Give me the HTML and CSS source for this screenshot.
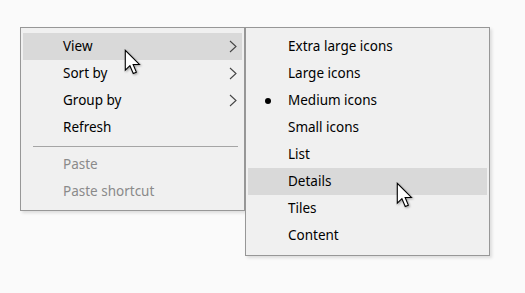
FILE: index.html
```html
<!DOCTYPE html>
<html>
<head>
<meta charset="utf-8">
<link rel="stylesheet" href="styles.css">
</head>
<body>
<div class="stage">
  <div class="menu main">
    <div class="item hot">View<svg class="chev" viewBox="0 0 8 12"><path d="M1 0.5 L7 6 L1 11.5" /></svg></div>
    <div class="item">Sort by<svg class="chev" viewBox="0 0 8 12"><path d="M1 0.5 L7 6 L1 11.5" /></svg></div>
    <div class="item">Group by<svg class="chev" viewBox="0 0 8 12"><path d="M1 0.5 L7 6 L1 11.5" /></svg></div>
    <div class="item">Refresh</div>
    <div class="sep"></div>
    <div class="item off">Paste</div>
    <div class="item off">Paste shortcut</div>
    <svg class="cursor c1" viewBox="0 0 14 21"><path d="M1 1 L1 16.5 L4.6 13 L7.2 19 L9.6 18 L7.1 12 L12 12 Z"/></svg>
  </div>
  <div class="menu sub">
    <div class="item">Extra large icons</div>
    <div class="item">Large icons</div>
    <div class="item"><span class="bullet"></span>Medium icons</div>
    <div class="item">Small icons</div>
    <div class="item">List</div>
    <div class="item hot">Details</div>
    <div class="item">Tiles</div>
    <div class="item">Content</div>
    <svg class="cursor c2" viewBox="0 0 14 21"><path d="M1 1 L1 16.5 L4.6 13 L7.2 19 L9.6 18 L7.1 12 L12 12 Z"/></svg>
  </div>
</div>
</body>
</html>
```
FILE: styles.css
```css
html, body {
  margin: 0;
  padding: 0;
  background: #fafafa;
  width: 525px;
  height: 293px;
  overflow: hidden;
}
.stage {
  display: flex;
  align-items: flex-start;
  padding: 27px 0 0 20px;
  font-family: "Noto Sans", "Segoe UI", sans-serif;
  font-size: 13.5px;
  color: #000;
}
.menu {
  position: relative;
  background: #f0f0f0;
  border: 1px solid #979797;
  padding: 5px 2px;
  box-shadow: 2px 2px 3px rgba(0,0,0,0.12);
}
.main {
  width: 219px;
}
.sub {
  width: 239px;
  padding-bottom: 6px;
}
.item {
  position: relative;
  height: 27px;
  line-height: 27px;
  padding-left: 40px;
}
.hot {
  background: #d9d9d9;
}
.off {
  color: #8a8a8a;
}
.sep {
  height: 1px;
  background: #a5a5a5;
  margin: 5px 4px 4px 10px;
}
.chev {
  position: absolute;
  right: 5px;
  top: 7px;
  width: 8px;
  height: 13px;
  fill: none;
  stroke: #444;
  stroke-width: 1.1;
}
.bullet {
  position: absolute;
  left: 17px;
  top: 11px;
  width: 6px;
  height: 6px;
  border-radius: 50%;
  background: #000;
}
.cursor {
  position: absolute;
  width: 18px;
  height: 27px;
  fill: #fff;
  stroke: #000;
  stroke-width: 0.85;
  stroke-linejoin: miter;
  filter: drop-shadow(1px 1px 1px rgba(0,0,0,0.35));
}
.c1 {
  left: 103px;
  top: 21px;
}
.c2 {
  left: 150px;
  top: 154px;
}
```
